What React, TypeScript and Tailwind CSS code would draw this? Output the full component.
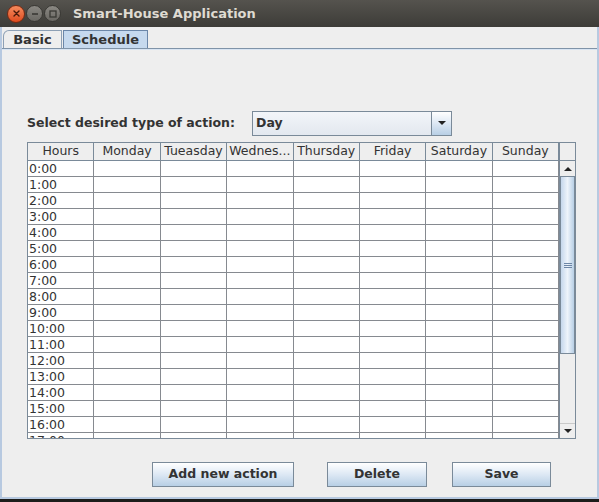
import React from 'react';

const days = ['Monday', 'Tueasday', 'Wednes...', 'Thursday', 'Friday', 'Saturday', 'Sunday'];
const hours = Array.from({ length: 18 }, (_, i) => `${i}:00`);

const font = { fontFamily: '"DejaVu Sans", "Liberation Sans", sans-serif' };

const TitleButton = ({ kind }: { kind: 'close' | 'min' | 'max' }) => {
  if (kind === 'close') {
    return (
      <div className="w-[18px] h-[18px] shrink-0 rounded-full border border-[#7a2a12] bg-gradient-to-b from-[#f58a5c] to-[#df4a1c] flex items-center justify-center">
        <svg width="7" height="7" viewBox="0 0 7 7">
          <path d="M1 1 L6 6 M6 1 L1 6" stroke="#4a1a0a" strokeWidth="1.4" strokeLinecap="round" />
        </svg>
      </div>
    );
  }
  return (
    <div className="w-[17px] h-[17px] shrink-0 rounded-full border border-[#3a3935] bg-gradient-to-b from-[#8a8883] to-[#6a6863] flex items-center justify-center">
      <svg width="8" height="8" viewBox="0 0 8 8">
        {kind === 'min' ? (
          <path d="M1 4 H7" stroke="#3a3935" strokeWidth="1.6" />
        ) : (
          <rect x="1" y="1" width="6" height="6" fill="none" stroke="#3a3935" strokeWidth="1.3" />
        )}
      </svg>
    </div>
  );
};

const Arrow = ({ up }: { up?: boolean }) => (
  <svg width="8" height="5" viewBox="0 0 8 5">
    <path d={up ? 'M0 5 L4 1 L8 5 Z' : 'M0 0 L8 0 L4 4 Z'} fill="#222" />
  </svg>
);

const JButton = ({ label, className }: { label: string; className: string }) => (
  <div
    className={`h-[25px] flex items-center justify-center border border-[#7a8a99] bg-gradient-to-b from-[#ffffff] via-[#dde8f4] to-[#b8cfe5] text-[12.5px] font-bold text-[#333] ${className}`}
  >
    {label}
  </div>
);

export default function App() {
  return (
    <div className="w-[599px] h-[502px] flex flex-col bg-[#1c1c1a] overflow-hidden" style={font}>
      {/* Title bar */}
      <div className="h-[27px] shrink-0 flex items-center bg-gradient-to-b from-[#55534e] to-[#3d3c38]">
        <div className="flex items-center gap-[1px] pl-[7px]">
          <TitleButton kind="close" />
          <TitleButton kind="min" />
          <TitleButton kind="max" />
        </div>
        <span className="ml-[12px] text-[13px] font-bold text-[#dfdbd2]">Smart-House Application</span>
      </div>

      {/* Window body */}
      <div className="h-[472px] shrink-0 flex flex-col bg-[#eeeeee] border-x-2 border-b-2 border-[#b7c9e0]">
        {/* Tabs */}
        <div className="h-[21px] shrink-0 flex items-end pl-[1px] gap-[1px]">
          <div className="h-[18px] w-[59px] flex items-center justify-center border border-b-0 border-[#8da0b5] rounded-tl-[6px] bg-[#eeeeee] text-[13px] font-bold text-[#333]">
            Basic
          </div>
          <div className="h-[18px] w-[85px] flex items-center justify-center border border-b-0 border-[#6b86a8] bg-[#c6d9ee] text-[13px] font-bold text-[#333]">
            Schedule
          </div>
        </div>

        {/* Content panel */}
        <div className="flex-1 flex flex-col border-t border-[#7f93a8] bg-[#eeeeee] pl-[25px]">
          <div className="h-[1px] -ml-[25px] bg-[#d8e4f2]" />
          <div className="mt-[61px] h-[25px] flex items-center">
            <span className="w-[225px] text-[12.5px] font-bold text-[#333]">Select desired type of action:</span>
            <div className="w-[200px] h-[25px] flex border border-[#7a8a99] bg-gradient-to-b from-[#f2f5f9] to-[#e3e8ef]">
              <span className="flex-1 pl-[3px] flex items-center text-[12.5px] font-bold text-[#333]">Day</span>
              <div className="w-[20px] flex items-center justify-center border-l border-[#7a8a99] bg-gradient-to-b from-[#ffffff] via-[#dde8f4] to-[#b8cfe5]">
                <Arrow />
              </div>
            </div>
          </div>

          {/* Table */}
          <div className="mt-[6px] w-[549px] h-[297px] flex border border-[#7a8a99] bg-[#eeeeee]">
            <div className="w-[532px] flex flex-col">
              <div className="h-[18px] shrink-0 grid grid-cols-8 border-b border-[#7a8a99] bg-[#eeeeee]">
                {['Hours', ...days].map((d) => (
                  <div key={d} className="border-r border-[#7a8a99] flex items-center justify-center text-[12.5px] text-[#333] overflow-hidden whitespace-nowrap">
                    {d}
                  </div>
                ))}
              </div>
              <div className="flex-1 overflow-hidden bg-white">
                {hours.map((h) => (
                  <div key={h} className="h-[16px] grid grid-cols-8 border-b border-[#868a90]">
                    <div className="border-r border-[#868a90] pl-[1px] text-[12.5px] leading-[15px] text-[#333]">{h}</div>
                    {days.map((d) => (
                      <div key={d} className="border-r border-[#868a90]" />
                    ))}
                  </div>
                ))}
              </div>
            </div>

            {/* Scrollbar */}
            <div className="w-[16px] flex flex-col border-l border-[#7a8a99]">
              <div className="h-[18px] shrink-0 border-b border-[#7a8a99] bg-[#eeeeee]" />
              <div className="h-[15px] shrink-0 flex items-center justify-center bg-[#eeeeee]">
                <Arrow up />
              </div>
              <div className="h-[178px] shrink-0 flex items-center justify-center border border-[#7a8a99] bg-gradient-to-r from-[#c5d7ec] via-[#eef4fb] to-[#b8cfe5]">
                <svg width="8" height="5" viewBox="0 0 8 5">
                  <path d="M0 0.5 H8 M0 2.5 H8 M0 4.5 H8" stroke="#6d86a6" strokeWidth="1" />
                </svg>
              </div>
              <div className="flex-1 bg-[#eeeeee]" />
              <div className="h-[15px] shrink-0 flex items-center justify-center border-t border-[#c9c9c9] bg-[#eeeeee]">
                <Arrow />
              </div>
            </div>
          </div>

          {/* Buttons */}
          <div className="mt-[23px] flex">
            <JButton label="Add new action" className="ml-[125px] w-[142px]" />
            <JButton label="Delete" className="ml-[33px] w-[100px]" />
            <JButton label="Save" className="ml-[25px] w-[99px]" />
          </div>
        </div>
      </div>
    </div>
  );
}
